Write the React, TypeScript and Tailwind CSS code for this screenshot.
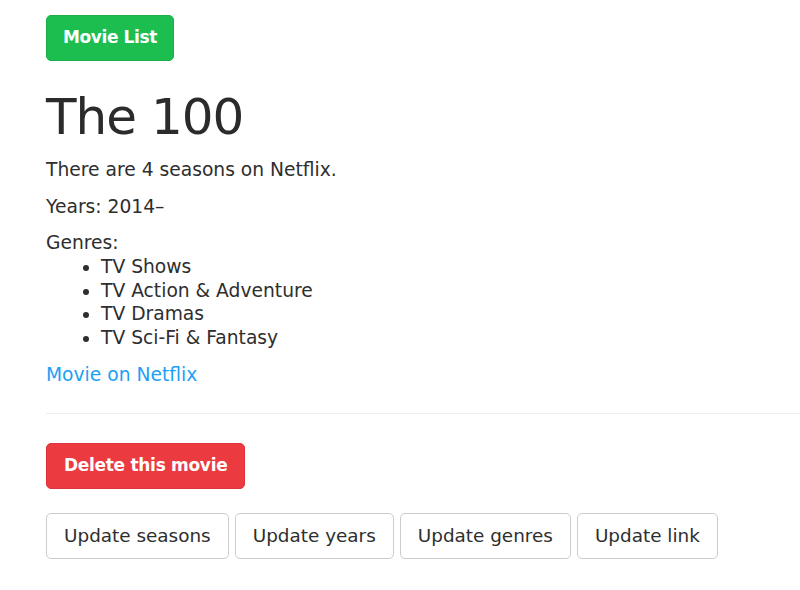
const GENRES = ['TV Shows', 'TV Action & Adventure', 'TV Dramas', 'TV Sci-Fi & Fantasy'];

const UPDATES = ['Update seasons', 'Update years', 'Update genres', 'Update link'];

export default function App() {
  return (
    <div className="min-h-[590px] bg-white pl-[46px] pt-[15px] text-[#2e2e2e] font-['DejaVu_Sans',sans-serif]">
      <button
        type="button"
        className="h-[46px] px-[16px] rounded-[5px] bg-[#1cbe50] border border-[#19b049] text-white text-[17px] font-bold tracking-[-0.4px]"
      >
        Movie List
      </button>

      <h1 className="mt-[28px] mb-[13px] text-[50px] leading-[56px] tracking-[-1px] text-[#2b2b2b]">
        The 100
      </h1>

      <p className="text-[18.7px] leading-[24px]">There are 4 seasons on Netflix.</p>
      <p className="mt-[13px] text-[18.7px] leading-[24px]">Years: 2014–</p>

      <div className="mt-[12px] text-[18.7px] leading-[24px]">
        <div>Genres:</div>
        <ul className="list-disc pl-[55px]">
          {GENRES.map((g) => (
            <li key={g} className="leading-[23.5px]">
              {g}
            </li>
          ))}
        </ul>
      </div>

      <a href="#" className="block mt-[14px] text-[18.7px] leading-[24px] text-[#1d9ff5] w-fit">
        Movie on Netflix
      </a>

      <hr className="mt-[26px] border-t border-[#eeeeee]" />

      <button
        type="button"
        className="mt-[29px] h-[46px] px-[17px] rounded-[5px] bg-[#ec3a41] border border-[#e0323a] text-white text-[17px] font-bold tracking-[-0.3px]"
      >
        Delete this movie
      </button>

      <div className="mt-[24px] flex gap-[6px]">
        {UPDATES.map((u) => (
          <button
            key={u}
            type="button"
            className="h-[46px] px-[17px] rounded-[5px] bg-white border border-[#cccccc] text-[18.4px] text-[#2e2e2e]"
          >
            {u}
          </button>
        ))}
      </div>
    </div>
  );
}
